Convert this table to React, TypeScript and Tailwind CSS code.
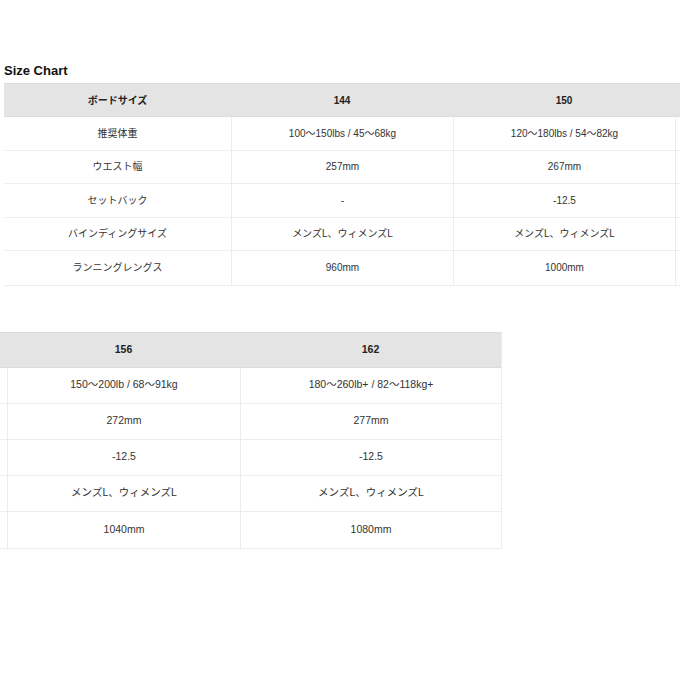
const labels = ["推奨体重", "ウエスト幅", "セットバック", "バインディングサイズ", "ランニングレングス"];

const topCols = [
  { size: "144", vals: ["100〜150lbs / 45〜68kg", "257mm", "-", "メンズL、ウィメンズL", "960mm"] },
  { size: "150", vals: ["120〜180lbs / 54〜82kg", "267mm", "-12.5", "メンズL、ウィメンズL", "1000mm"] },
];

const bottomCols = [
  { size: "156", w: "w-[233px]", vals: ["150〜200lb / 68〜91kg", "272mm", "-12.5", "メンズL、ウィメンズL", "1040mm"] },
  { size: "162", w: "w-[261px]", vals: ["180〜260lb+ / 82〜118kg+", "277mm", "-12.5", "メンズL、ウィメンズL", "1080mm"] },
];

const font = { fontFamily: '"Liberation Sans", "Noto Sans CJK JP", sans-serif' };

export default function App() {
  return (
    <div className="w-[680px] h-[680px] bg-white overflow-hidden text-[#333]" style={font}>
      <div className="pt-[61px] pl-1 text-[13px] font-bold text-[#111] h-[22px] box-content">Size Chart</div>

      {/* first view of the table */}
      <div className="mt-[0px] ml-1 flex w-[680px] border-b border-[#ececec]">
        <div className="w-[227px] shrink-0 flex flex-col">
          <div className="h-[34px] bg-[#e4e4e4] border-y border-[#dcdcdc] flex items-center justify-center text-[10px] font-bold text-[#222]">
            ボードサイズ
          </div>
          {labels.map((l) => (
            <div key={l} className="h-[33.5px] border-b border-[#efefef] last:border-b-0 flex items-center justify-center text-[10px]">
              {l}
            </div>
          ))}
        </div>
        {topCols.map((c) => (
          <div key={c.size} className="w-[222px] shrink-0 flex flex-col">
            <div className="h-[34px] bg-[#e4e4e4] border-y border-[#dcdcdc] flex items-center justify-center text-[10px] font-bold text-[#222]">
              {c.size}
            </div>
            {c.vals.map((v, i) => (
              <div key={i} className="h-[33.5px] border-l border-b border-[#ececec] last:border-b-0 flex items-center justify-center text-[10px]">
                {v}
              </div>
            ))}
          </div>
        ))}
        <div className="w-[40px] shrink-0 flex flex-col">
          <div className="h-[34px] bg-[#e4e4e4] border-y border-[#dcdcdc]" />
          {labels.map((l) => (
            <div key={l} className="h-[33.5px] border-l border-b border-[#ececec] last:border-b-0" />
          ))}
        </div>
      </div>

      {/* second view, scrolled right */}
      <div className="mt-[46px] flex w-[502px] border-b border-[#ececec]">
        <div className="w-[7px] shrink-0 flex flex-col">
          <div className="h-[36px] bg-[#e4e4e4] border-y border-[#dcdcdc]" />
          {labels.map((l) => (
            <div key={l} className="h-[36px] border-b border-[#efefef] last:border-b-0" />
          ))}
        </div>
        {bottomCols.map((c) => (
          <div key={c.size} className={`${c.w} shrink-0 flex flex-col`}>
            <div className="h-[36px] bg-[#e4e4e4] border-y border-[#dcdcdc] flex items-center justify-center text-[10.5px] font-bold text-[#222]">
              {c.size}
            </div>
            {c.vals.map((v, i) => (
              <div key={i} className="h-[36px] border-l border-b border-[#ececec] last:border-b-0 flex items-center justify-center text-[10.5px]">
                {v}
              </div>
            ))}
          </div>
        ))}
        <div className="w-px shrink-0 bg-[#ececec]" />
      </div>
    </div>
  );
}
